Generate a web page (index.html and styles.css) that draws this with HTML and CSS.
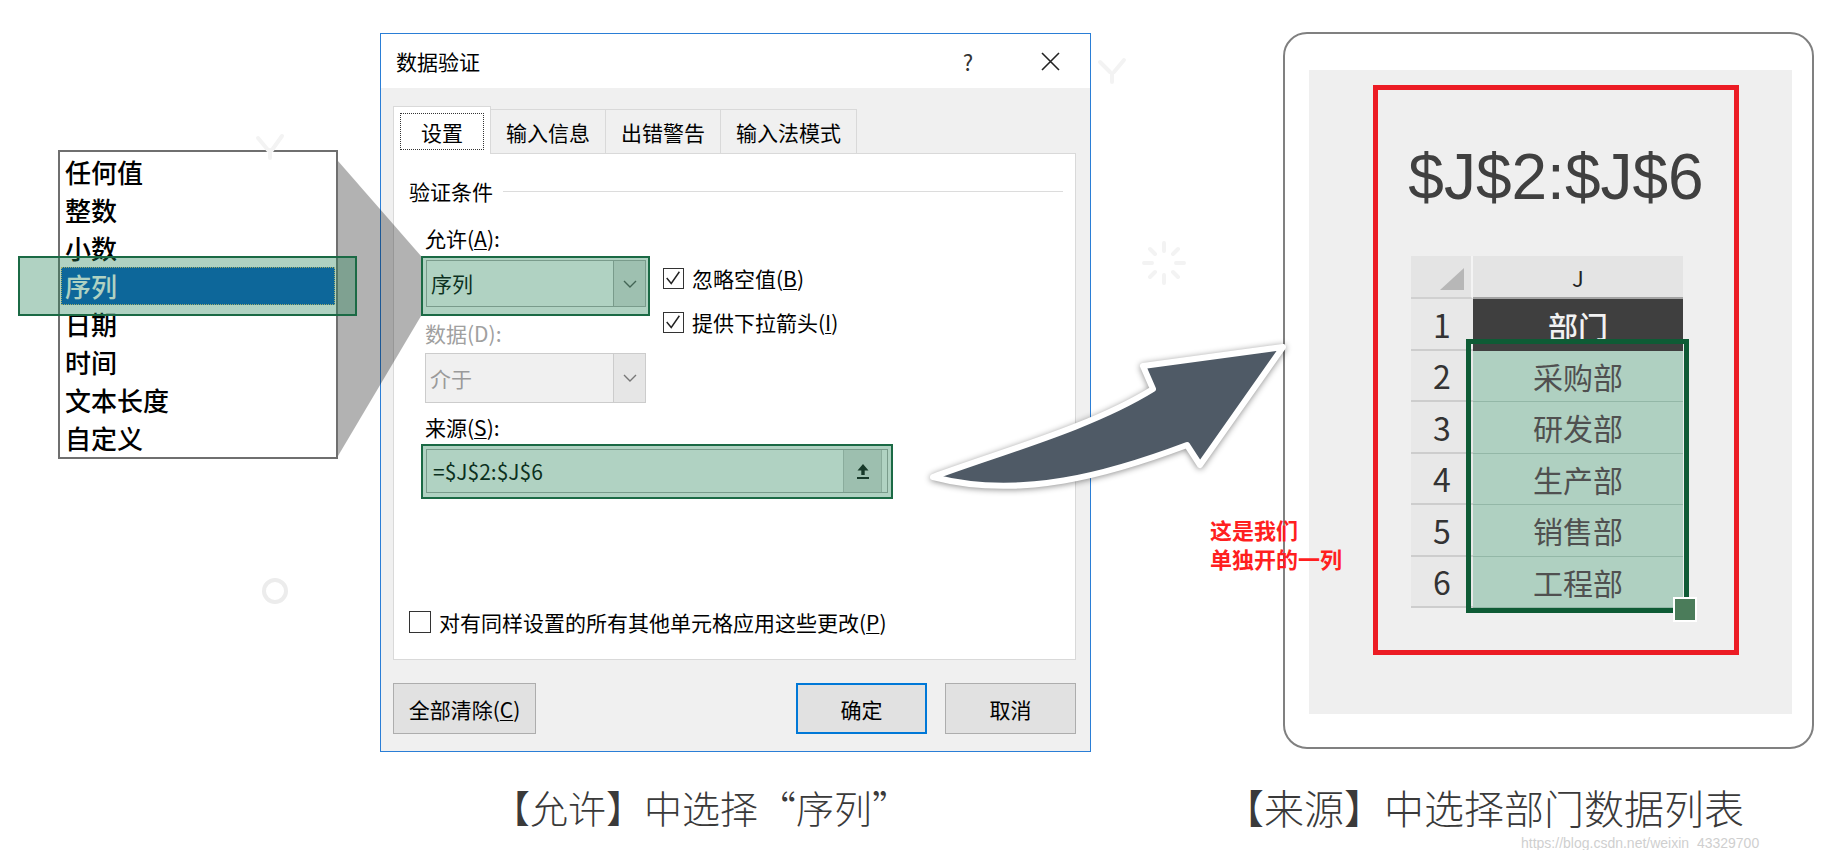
FILE: index.html
```html
<!DOCTYPE html>
<html lang="zh-CN">
<head>
    <meta charset="UTF-8">
    <title>数据验证 - 序列</title>
    <link rel="stylesheet" href="styles.css">
</head>
<body>

<div class="stage">
    <!-- faint background decoration -->
    <svg class="backdrop" viewBox="0 0 1835 850" width="1835" height="850">
        <g stroke="#f3f3f3" stroke-width="4" fill="none" stroke-linecap="round">
            <circle cx="275" cy="591" r="11" stroke="#ececec"/>
            <path d="M258 138 L268 150 M282 136 L272 150 M270 150 L270 158"/>
            <path d="M1100 62 L1110 72 M1124 60 L1114 72 M1112 74 L1112 82"/>
            <path d="M1164 243 L1164 251 M1164 275 L1164 283 M1144 263 L1152 263 M1176 263 L1184 263 M1150 249 L1155 254 M1173 272 L1178 277 M1178 249 L1173 254 M1150 277 L1155 272"/>
        </g>
    </svg>

    <div class="scene">
        <ul class="listbox">
            <li>任何值</li>
            <li>整数</li>
            <li>小数</li>
            <li class="picked">序列</li>
            <li>日期</li>
            <li>时间</li>
            <li>文本长度</li>
            <li>自定义</li>
        </ul>

        <div class="dialog">
            <div class="titlebar">
                <h2>数据验证</h2>
                <span class="help">?</span>
                <svg class="close" viewBox="0 0 19 19" width="19" height="19">
                    <path d="M1 1 L18 18 M18 1 L1 18" stroke="#222" stroke-width="1.6"/>
                </svg>
            </div>

            <div class="dialog-body">
                <div class="tabs">
                    <div class="tab tab-active"><span class="focus-ring">设置</span></div>
                    <div class="tab">输入信息</div>
                    <div class="tab">出错警告</div>
                    <div class="tab">输入法模式</div>
                </div>

                <div class="panel">
                    <div class="group">验证条件</div>

                    <div class="fields">
                        <div class="field-col">
                            <div class="label">允许(<u>A</u>):</div>
                            <div class="combo">
                                <span class="combo-text">序列</span>
                                <span class="combo-btn">
                                    <svg viewBox="0 0 14 8" width="14" height="8"><polyline points="1,1 7,7 13,1" fill="none" stroke="#555" stroke-width="1.4"/></svg>
                                </span>
                            </div>
                            <div class="label label-off">数据(D):</div>
                            <div class="combo combo-off">
                                <span class="combo-text">介于</span>
                                <span class="combo-btn">
                                    <svg viewBox="0 0 14 8" width="14" height="8"><polyline points="1,1 7,7 13,1" fill="none" stroke="#777" stroke-width="1.4"/></svg>
                                </span>
                            </div>
                        </div>

                        <div class="checks">
                            <div class="check">
                                <span class="box">
                                    <svg viewBox="0 0 21 21" width="19" height="19"><polyline points="3,10 8,16 17,3" fill="none" stroke="#222" stroke-width="1.6"/></svg>
                                </span>
                                <span>忽略空值(<u>B</u>)</span>
                            </div>
                            <div class="check">
                                <span class="box">
                                    <svg viewBox="0 0 21 21" width="19" height="19"><polyline points="3,10 8,16 17,3" fill="none" stroke="#222" stroke-width="1.6"/></svg>
                                </span>
                                <span>提供下拉箭头(<u>I</u>)</span>
                            </div>
                        </div>
                    </div>

                    <div class="label label-source">来源(<u>S</u>):</div>
                    <div class="source">
                        <span class="source-text">=$J$2:$J$6</span>
                        <span class="source-btn">
                            <svg viewBox="0 0 16 18" width="16" height="18">
                                <path d="M8 2 L2.5 8.5 H6.3 V13 H9.7 V8.5 H13.5 Z" fill="#111"/>
                                <rect x="2" y="15" width="12" height="2" fill="#111"/>
                            </svg>
                        </span>
                    </div>

                    <div class="check check-apply">
                        <span class="box box-empty"></span>
                        <span>对有同样设置的所有其他单元格应用这些更改(<u>P</u>)</span>
                    </div>
                </div>

                <div class="actions">
                    <button class="btn btn-clear">全部清除(<u>C</u>)</button>
                    <button class="btn btn-ok">确定</button>
                    <button class="btn btn-cancel">取消</button>
                </div>
            </div>
        </div>

        <div class="device">
            <div class="screen">
                <div class="range">
                    <div class="range-ref">$J$2:$J$6</div>
                    <div class="sheet">
                        <div class="corner">
                            <svg viewBox="0 0 24 22" width="24" height="22"><polygon points="24,0 24,22 0,22" fill="#b7b7b7"/></svg>
                        </div>
                        <div class="col-head">J</div>

                        <div class="row-head">1</div>
                        <div class="cell cell-title">部门</div>
                        <div class="row-head">2</div>
                        <div class="cell">采购部</div>
                        <div class="row-head">3</div>
                        <div class="cell">研发部</div>
                        <div class="row-head">4</div>
                        <div class="cell">生产部</div>
                        <div class="row-head">5</div>
                        <div class="cell">销售部</div>
                        <div class="row-head">6</div>
                        <div class="cell">工程部</div>

                        <div class="sel"></div>
                        <div class="handle"></div>
                    </div>
                </div>
            </div>
        </div>
    </div>

    <div class="captions">
        <p class="caption caption-left">【允许】中选择“序列”</p>
        <p class="caption caption-right">【来源】中选择部门数据列表</p>
    </div>

    <!-- callout from the list to the 允许 combo -->
    <svg class="wedge" viewBox="330 150 100 320" width="100" height="320">
        <polygon points="338,161 421,256 421,316 338,456" fill="rgba(0,0,0,0.3)"/>
    </svg>

    <div class="mark mark-list"></div>
    <div class="mark mark-allow"></div>
    <div class="mark mark-source"></div>

    <svg class="swoosh" viewBox="900 320 420 200" width="420" height="200">
        <path d="M933 477 C1000 452 1090 428 1153 389 L1143 366 L1283 347 L1200 465 L1187 445 C1110 474 1020 500 933 477 Z"
              fill="#4f5a66" stroke="#fff" stroke-width="6" stroke-linejoin="round"/>
    </svg>

    <p class="note">这是我们<br>单独开的一列</p>

    <span class="watermark">https://blog.csdn.net/weixin_43329700</span>
</div>

</body>
</html>
```

FILE: styles.css
```css
body {
    margin: 0;
    font-family: "Noto Sans CJK SC", "Noto Sans", sans-serif;
    color: #000;
    background-color: #fff;
}

u {
    text-decoration-thickness: 1px;
    text-underline-offset: 2px;
}

.stage {
    position: relative;
    width: 1835px;
    height: 850px;
    overflow: hidden;
}

.backdrop {
    position: absolute;
    left: 0;
    top: 0;
}

.scene {
    display: flex;
    align-items: flex-start;
}

/* drop-down list on the left */
.listbox {
    list-style: none;
    margin: 150px 0 0 58px;
    padding: 1px;
    width: 280px;
    height: 309px;
    box-sizing: border-box;
    border: 2px solid #6f6f6f;
    background-color: #fff;
    font-size: 26px;
    font-weight: 500;
}

.listbox li {
    height: 38px;
    line-height: 38px;
    padding-left: 4px;
}

.listbox .picked {
    background-color: #0058c0;
    color: #fff;
    outline: 1px dotted #e2c57a;
    outline-offset: -1px;
}

/* data validation dialog */
.dialog {
    margin: 33px 0 0 42px;
    width: 711px;
    height: 719px;
    box-sizing: border-box;
    border: 1px solid #2a7ed6;
    background-color: #f0f0f0;
    display: flex;
    flex-direction: column;
    font-size: 21px;
}

.titlebar {
    height: 54px;
    background-color: #fff;
    display: flex;
    align-items: center;
    padding: 0 30px 0 15px;
}

.titlebar h2 {
    margin: 0;
    font-size: 21px;
    font-weight: normal;
}

.help {
    margin-left: auto;
    width: 20px;
    text-align: center;
    font-size: 22px;
    color: #333;
}

.close {
    margin-left: 63px;
}

.dialog-body {
    flex: 1;
    padding: 18px 14px 17px 12px;
    display: flex;
    flex-direction: column;
}

.tabs {
    display: flex;
    align-items: flex-end;
    height: 47px;
}

.tab {
    height: 44px;
    box-sizing: border-box;
    padding: 0 15px;
    border: 1px solid #d9d9d9;
    border-left: none;
    border-bottom: none;
    display: flex;
    align-items: center;
    justify-content: center;
}

.tab-active {
    height: 48px;
    margin-bottom: -1px;
    padding: 6px 6px 0;
    align-items: flex-start;
    background-color: #fff;
    border-left: 1px solid #d9d9d9;
    position: relative;
    z-index: 1;
}

.focus-ring {
    height: 37px;
    box-sizing: border-box;
    padding: 0 20px;
    border: 1px dotted #333;
    display: flex;
    align-items: center;
}

.panel {
    height: 507px;
    box-sizing: border-box;
    border: 1px solid #d9d9d9;
    background-color: #fff;
    padding: 22px 12px 22px 15px;
    display: flex;
    flex-direction: column;
}

.group {
    height: 30px;
    display: flex;
    align-items: center;
}

.group::after {
    content: "";
    flex: 1;
    height: 1px;
    margin-left: 10px;
    background-color: #dcdcdc;
}

.fields {
    display: flex;
    align-items: flex-start;
    margin: 17px 0 0 16px;
}

.field-col {
    width: 221px;
    display: flex;
    flex-direction: column;
}

.label {
    height: 30px;
    line-height: 30px;
}

.label-off {
    margin-top: 11px;
    color: #a0a0a0;
}

.label-source {
    margin: 9px 0 0 16px;
}

.combo {
    width: 220px;
    height: 47px;
    margin: 7px 0 0 1px;
    box-sizing: border-box;
    border: 1px solid #a9a9a9;
    background-color: #fff;
    display: flex;
}

.combo-text {
    flex: 1;
    padding-left: 4px;
    line-height: 45px;
}

.combo-btn {
    width: 31px;
    border-left: 1px solid #a9a9a9;
    background-color: #e3e3e3;
    display: flex;
    align-items: center;
    justify-content: center;
}

.combo-off {
    width: 221px;
    height: 50px;
    margin: 5px 0 0;
    border-color: #cccccc;
    background-color: #f0f0f0;
    color: #9a9a9a;
}

.combo-off .combo-text {
    line-height: 48px;
}

.combo-off .combo-btn {
    border-left-color: #cccccc;
    background-color: #e6e6e6;
}

.checks {
    margin: 40px 0 0 17px;
    display: flex;
    flex-direction: column;
    gap: 14px;
}

.check {
    height: 30px;
    display: flex;
    align-items: center;
    gap: 8px;
}

.box {
    width: 21px;
    height: 21px;
    box-sizing: border-box;
    border: 1px solid #333;
    background-color: #fff;
    display: flex;
    align-items: center;
    justify-content: center;
}

.check-apply {
    margin-top: auto;
}

.box-empty {
    width: 22px;
    height: 22px;
}

.source {
    width: 462px;
    height: 44px;
    margin: 7px 0 0 17px;
    box-sizing: border-box;
    border: 1px solid #a9a9a9;
    background-color: #fff;
    display: flex;
}

.source-text {
    flex: 1;
    padding-left: 6px;
    line-height: 42px;
}

.source-btn {
    width: 37px;
    margin-right: 5px;
    background-color: #e1e1e1;
    border-left: 1px solid #c4c4c4;
    border-right: 1px solid #c4c4c4;
    display: flex;
    align-items: center;
    justify-content: center;
}

.actions {
    display: flex;
    margin-top: 23px;
}

.btn {
    height: 51px;
    box-sizing: border-box;
    border: 1px solid #adadad;
    background-color: #e1e1e1;
    font-family: inherit;
    font-size: 21px;
    color: #000;
    padding: 0;
}

.btn-clear {
    width: 143px;
}

.btn-ok {
    width: 131px;
    margin-left: auto;
    border: 2px solid #0078d7;
}

.btn-cancel {
    width: 131px;
    margin-left: 18px;
}

/* right frame with the sheet */
.device {
    margin: 32px 0 0 192px;
    width: 531px;
    height: 717px;
    box-sizing: border-box;
    border: 2px solid #808080;
    border-radius: 24px;
    padding: 36px 20px 33px 24px;
    background-color: #fff;
}

.screen {
    height: 100%;
    box-sizing: border-box;
    padding: 15px 0 0 64px;
    background-color: #efefef;
}

.range {
    width: 366px;
    height: 570px;
    box-sizing: border-box;
    border: 5px solid #ec1c24;
    padding-top: 55px;
}

.range-ref {
    font-family: "Liberation Sans", Arial, sans-serif;
    font-size: 64px;
    line-height: 64px;
    color: #404040;
    text-align: center;
}

.sheet {
    position: relative;
    width: 272px;
    margin: 47px 0 0 33px;
    display: grid;
    grid-template-columns: 62px 210px;
    grid-template-rows: 43px repeat(6, 51.5px);
}

.corner {
    background-color: #e4e4e4;
    border-right: 2px solid #f4f4f4;
    border-bottom: 2px solid #d0d0d0;
    display: flex;
    align-items: flex-end;
    justify-content: flex-end;
    padding: 0 7px 7px 0;
}

.col-head {
    background-color: #e4e4e4;
    border-bottom: 2px solid #a3a3a3;
    font-size: 22px;
    color: #222;
    display: flex;
    align-items: center;
    justify-content: center;
}

.row-head {
    background-color: #e8e8e8;
    border-bottom: 2px solid #cdcdcd;
    font-size: 32px;
    color: #333;
    display: flex;
    align-items: center;
    justify-content: center;
}

.cell {
    background-color: #afd0c1;
    border-bottom: 1px solid #93b7a7;
    font-size: 30px;
    color: #505050;
    display: flex;
    align-items: center;
    justify-content: center;
}

.cell-title {
    background-color: #3f3f3f;
    border-bottom: none;
    font-size: 30px;
    font-weight: 500;
    color: #f2f2f2;
}

.sel {
    position: absolute;
    left: 55px;
    top: 83px;
    width: 223px;
    height: 274px;
    box-sizing: border-box;
    border: 5px solid #0e5b35;
}

.handle {
    position: absolute;
    left: 262px;
    top: 341px;
    width: 24px;
    height: 25px;
    box-sizing: border-box;
    border: 2px solid #fff;
    background-color: #4b7c5a;
}

/* captions */
.captions {
    display: flex;
    margin-top: 35px;
}

.caption {
    margin: 0;
    font-size: 38px;
    line-height: 40px;
    font-weight: 300;
    color: #3a3a3a;
    white-space: nowrap;
}

.caption-left {
    width: 420px;
    margin-left: 492px;
}

.caption-right {
    margin-left: 312px;
    font-size: 40px;
}

/* overlays */
.wedge {
    position: absolute;
    left: 330px;
    top: 150px;
}

.mark {
    position: absolute;
    box-sizing: border-box;
    border: 2px solid #1b6a45;
    background-color: rgba(36, 130, 85, 0.36);
}

.mark-list {
    left: 18px;
    top: 256px;
    width: 339px;
    height: 60px;
}

.mark-allow {
    left: 421px;
    top: 256px;
    width: 229px;
    height: 60px;
}

.mark-source {
    left: 421px;
    top: 444px;
    width: 472px;
    height: 55px;
}

.swoosh {
    position: absolute;
    left: 900px;
    top: 320px;
    filter: drop-shadow(0 1px 3px rgba(0, 0, 0, 0.45));
}

.note {
    position: absolute;
    left: 1210px;
    top: 515px;
    margin: 0;
    font-size: 22px;
    line-height: 29px;
    font-weight: bold;
    color: #ff1f1f;
}

.watermark {
    position: absolute;
    left: 1521px;
    top: 836px;
    font-family: "Liberation Sans", Arial, sans-serif;
    font-size: 14px;
    line-height: 14px;
    color: #cfcfcf;
}
```
